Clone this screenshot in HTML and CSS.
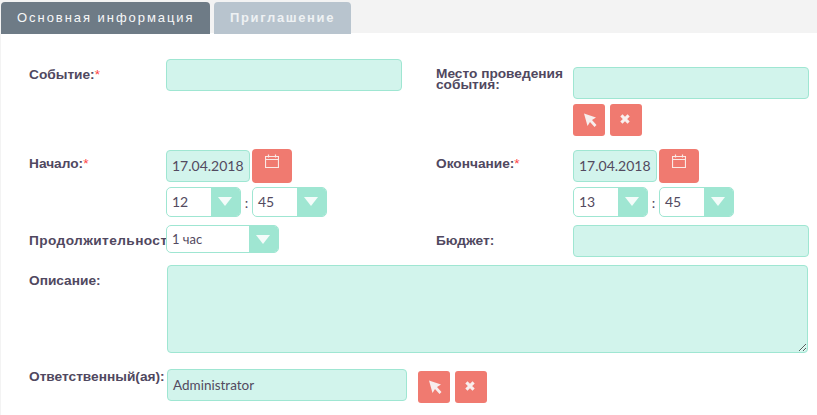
FILE: index.html
```html
<!DOCTYPE html>
<html lang="ru">
<head>
<meta charset="utf-8">
<title>Событие</title>
<link rel="stylesheet" href="styles.css">
</head>
<body>
<nav class="tabs">
  <a class="tab tab-active">Основная информация</a>
  <a class="tab tab-muted">Приглашение</a>
</nav>
<main class="form">
  <section class="row row-first">
    <div class="cell">
      <label class="label label-event">Событие:<span class="req">*</span></label>
      <div class="field"><div class="input input-event"></div></div>
    </div>
    <div class="cell cell-right">
      <label class="label label-place">Место проведения события:</label>
      <div class="field field-place">
        <div class="input input-wide"></div>
        <div class="btns">
          <button class="btn"><svg class="ico-arrow" viewBox="0 0 14 14"><path d="M1 0.5 L13 4.5 L9 7 L13.5 12 L11.5 14 L7 9 L4.5 13 Z" fill="#f7eeee"/></svg></button>
          <button class="btn"><svg class="ico-x" viewBox="0 0 10 10"><path d="M2 2 L8 8 M8 2 L2 8" stroke="#f9efee" stroke-width="2.6" fill="none"/></svg></button>
        </div>
      </div>
    </div>
  </section>
  <section class="row row-dates">
    <div class="cell">
      <label class="label label-date">Начало:<span class="req">*</span></label>
      <div class="field">
        <div class="date-line">
          <div class="input input-date">17.04.2018</div>
          <button class="cal"><svg viewBox="0 0 14 14" class="ico-cal"><path d="M0.5 2.5 H13.5 V13.5 H0.5 Z M0.5 5.5 H13.5 M3.5 0.5 V3.5 M10.5 0.5 V3.5" stroke="#fbe9e5" stroke-width="1.2" fill="none"/></svg></button>
        </div>
        <div class="time-line">
          <div class="select select-time"><span class="val">12</span><span class="arrow"></span></div>
          <span class="colon">:</span>
          <div class="select select-time"><span class="val">45</span><span class="arrow"></span></div>
        </div>
      </div>
    </div>
    <div class="cell cell-right">
      <label class="label label-date">Окончание:<span class="req">*</span></label>
      <div class="field">
        <div class="date-line">
          <div class="input input-date">17.04.2018</div>
          <button class="cal"><svg viewBox="0 0 14 14" class="ico-cal"><path d="M0.5 2.5 H13.5 V13.5 H0.5 Z M0.5 5.5 H13.5 M3.5 0.5 V3.5 M10.5 0.5 V3.5" stroke="#fbe9e5" stroke-width="1.2" fill="none"/></svg></button>
        </div>
        <div class="time-line">
          <div class="select select-time"><span class="val">13</span><span class="arrow"></span></div>
          <span class="colon">:</span>
          <div class="select select-time"><span class="val">45</span><span class="arrow"></span></div>
        </div>
      </div>
    </div>
  </section>
  <section class="row row-duration">
    <div class="cell">
      <label class="label label-duration">Продолжительность:</label>
      <div class="field"><div class="select select-duration"><span class="val val-small">1 час</span><span class="arrow"></span></div></div>
    </div>
    <div class="cell cell-right">
      <label class="label label-budget">Бюджет:</label>
      <div class="field"><div class="input input-wide"></div></div>
    </div>
  </section>
  <section class="row row-desc">
    <label class="label label-desc">Описание:</label>
    <textarea class="textarea"></textarea>
  </section>
  <section class="row row-owner">
    <label class="label label-owner">Ответственный(ая):</label>
    <div class="input input-owner">Administrator</div>
    <div class="btns btns-owner">
      <button class="btn"><svg class="ico-arrow" viewBox="0 0 14 14"><path d="M1 0.5 L13 4.5 L9 7 L13.5 12 L11.5 14 L7 9 L4.5 13 Z" fill="#f7eeee"/></svg></button>
      <button class="btn"><svg class="ico-x" viewBox="0 0 10 10"><path d="M2 2 L8 8 M8 2 L2 8" stroke="#f9efee" stroke-width="2.6" fill="none"/></svg></button>
    </div>
  </section>
</main>
</body>
</html>
```
FILE: styles.css
```css
* { box-sizing: border-box; }
html, body { margin: 0; padding: 0; }
body {
  width: 817px;
  height: 415px;
  overflow: hidden;
  background: #fff;
  border-left: 1px solid #f3f3f3;
  font-family: "Liberation Sans", Arial, sans-serif;
  color: #534a60;
}
.tabs {
  display: flex;
  gap: 4px;
  height: 33px;
  padding-top: 2px;
  background: #f3f3f3;
  margin-left: -1px;
  padding-left: 1px;
}
.tab {
  height: 32px;
  border-radius: 4px 4px 0 0;
  color: #f6f7f8;
  font-size: 13px;
  letter-spacing: 1.95px;
  line-height: 32px;
  white-space: nowrap;
}
.tab-active { width: 209px; background: #6e7b86; padding-left: 16px; }
.tab-muted { width: 137px; background: #b8c4ce; padding-left: 16px; font-weight: bold; letter-spacing: 1.65px; color: #eef1f3; }
.form { padding: 0 0 0 28px; }
.row { display: flex; }
.cell { display: flex; width: 407px; }
.cell-right { width: 380px; }
.label {
  display: block;
  flex: none;
  width: 138px;
  font-size: 13.7px;
  font-weight: bold;
  line-height: 12px;
  white-space: nowrap;
  overflow: hidden;
  color: #504860;
}
.cell .label { width: 137px; }
.req { color: #f44; font-weight: normal; }
.label-event { padding-top: 36px; height: 60px; }
.label-place { white-space: normal; padding-top: 3px; line-height: 11px; margin-top: 32px; }
.label-date { padding-top: 9px; }
.label-duration { padding-top: 10px; letter-spacing: 0.4px; }
.label-budget { padding-top: 10px; }
.label-desc { padding-top: 10px; }
.label-owner { padding-top: 2px; overflow: visible; }
.field { flex: none; }
.row-first { height: 115px; }
.input {
  background: #d2f4ec;
  border: 1px solid #9fe6d2;
  border-radius: 4px;
  height: 32px;
  font-family: Lato, sans-serif;
  font-size: 14px;
  line-height: 30px;
  padding-left: 5px;
  color: #534a60;
}
.input-event { width: 236px; margin-top: 26px; }
.input-wide { width: 236px; }
.field-place { padding-top: 34px; }
.btns { display: flex; gap: 5px; margin-top: 5px; }
.btn {
  width: 32px;
  height: 32px;
  padding: 0;
  border: 0;
  border-radius: 3px;
  background: #f07a70;
  display: flex;
  align-items: center;
  justify-content: center;
}
.ico-arrow { width: 14px; height: 14px; margin: 0 0 0 2px; }
.ico-x { width: 12px; height: 12px; margin: 0 2px 3px 0; }
.row-dates { height: 77px; padding-top: 1px; }
.date-line { display: flex; gap: 2px; align-items: center; height: 34px; }
.input-date { width: 84px; }
.cal {
  width: 40px;
  height: 34px;
  padding: 0 0 10px;
  border: 0;
  border-radius: 4px;
  background: #f07a70;
  display: flex;
  align-items: center;
  justify-content: center;
}
.ico-cal { width: 14px; height: 14px; }
.time-line { display: flex; align-items: center; margin-top: 4px; }
.colon { width: 11px; text-align: center; font-family: Lato, sans-serif; font-size: 14px; }
.select {
  display: flex;
  height: 30px;
  background: #fff;
  border: 1px solid #9fe6d2;
  border-radius: 5px;
  overflow: hidden;
  font-family: Lato, sans-serif;
  font-size: 14px;
  line-height: 28px;
  color: #534a60;
}
.select-time { width: 75px; }
.select-duration { width: 113px; height: 28px; line-height: 26px; }
.val { flex: 1; padding-left: 5px; }
.val-small { font-size: 13px; }
.arrow {
  position: relative;
  flex: none;
  width: 29px;
  background: #9fe6d2;
}
.arrow::after {
  content: "";
  position: absolute;
  left: 7px;
  top: 9px;
  border-left: 7.5px solid transparent;
  border-right: 7.5px solid transparent;
  border-top: 9px solid #f4fcfa;
}
.row-duration { height: 40px; }
.row-desc { height: 104px; }
.textarea {
  display: block;
  width: 641px;
  height: 88px;
  background: #d2f4ec;
  border: 1px solid #9fe6d2;
  border-radius: 4px;
  margin: 0;
  padding: 0;
}
.input-owner { width: 240px; font-size: 13.5px; }
.btns-owner { margin: 2px 0 0 11px; }
```
